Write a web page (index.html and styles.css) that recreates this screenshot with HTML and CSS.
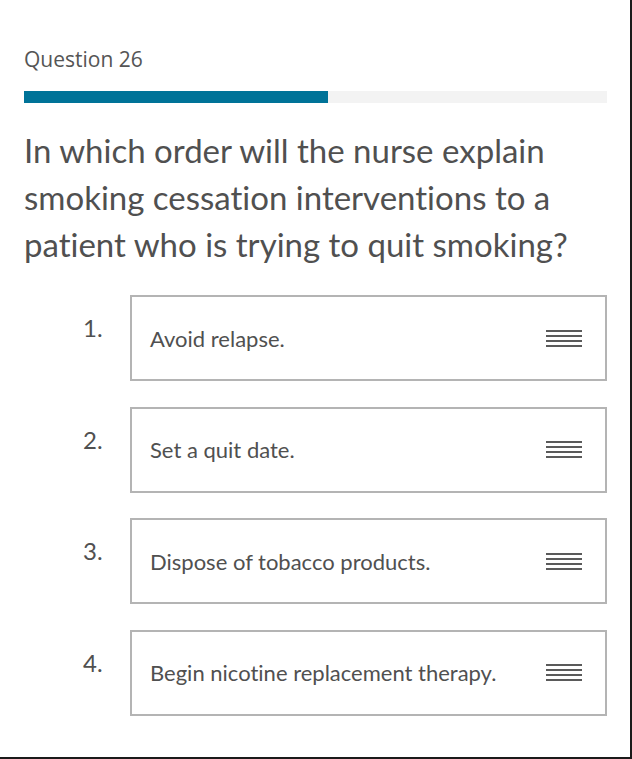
FILE: index.html
```html
<!DOCTYPE html>
<html lang="en">
<head>
<meta charset="utf-8">
<title>Question 26</title>
<link rel="stylesheet" href="styles.css">
</head>
<body>
<div class="frame">
  <main class="page">
    <h2 class="q-label">Question 26</h2>
    <div class="progress"><div class="progress-fill" style="width:52.1%"></div></div>
    <p class="q-text">In which order will the nurse explain smoking cessation interventions to a patient who is trying to quit smoking?</p>
    <ol class="options">
      <li class="option"><span class="num">1.</span><div class="box"><span class="opt-text">Avoid relapse.</span><span class="handle"><i></i><i></i><i></i><i></i></span></div></li>
      <li class="option"><span class="num">2.</span><div class="box"><span class="opt-text">Set a quit date.</span><span class="handle"><i></i><i></i><i></i><i></i></span></div></li>
      <li class="option"><span class="num">3.</span><div class="box"><span class="opt-text">Dispose of tobacco products.</span><span class="handle"><i></i><i></i><i></i><i></i></span></div></li>
      <li class="option"><span class="num">4.</span><div class="box"><span class="opt-text">Begin nicotine replacement therapy.</span><span class="handle"><i></i><i></i><i></i><i></i></span></div></li>
    </ol>
  </main>
</div>
</body>
</html>
```

FILE: styles.css
```css
* { box-sizing: border-box; }
html, body { margin: 0; padding: 0; background: #fff; }
.frame {
  width: 632px;
  height: 759px;
  border-right: 2px solid #1a1a1a;
  border-bottom: 2px solid #1a1a1a;
  overflow: hidden;
}
.page {
  padding: 44px 23px 0 24px;
  font-family: Lato, "Open Sans", sans-serif;
  font-variant-ligatures: none;
  color: #505050;
}
.q-label {
  margin: 0;
  font-family: "Open Sans", sans-serif;
  font-weight: 400;
  font-size: 21px;
  line-height: 30px;
  color: #555;
}
.progress {
  margin-top: 17px;
  height: 12px;
  background: #f3f3f3;
}
.progress-fill {
  height: 100%;
  background: #007398;
}
.q-text {
  margin: 24px 0 0;
  font-size: 33px;
  line-height: 47px;
  color: #505050;
}
.options {
  list-style: none;
  margin: 27px 0 0;
  padding: 0;
  display: flex;
  flex-direction: column;
  gap: 25.67px;
}
.option {
  display: flex;
  align-items: flex-start;
}
.num {
  flex: 0 0 106px;
  padding-left: 59px;
  padding-top: 20px;
  font-size: 24px;
  line-height: 26px;
  color: #505050;
}
.box {
  flex: 1;
  height: 86px;
  border: 2px solid #b4b4b4;
  display: flex;
  align-items: center;
  justify-content: space-between;
  padding: 0 23px 0 18px;
}
.opt-text {
  font-size: 22px;
  color: #505050;
}
.handle {
  display: flex;
  flex-direction: column;
  gap: 3px;
  width: 36px;
}
.handle i {
  display: block;
  height: 2px;
  background: #5a5a5a;
}
```
